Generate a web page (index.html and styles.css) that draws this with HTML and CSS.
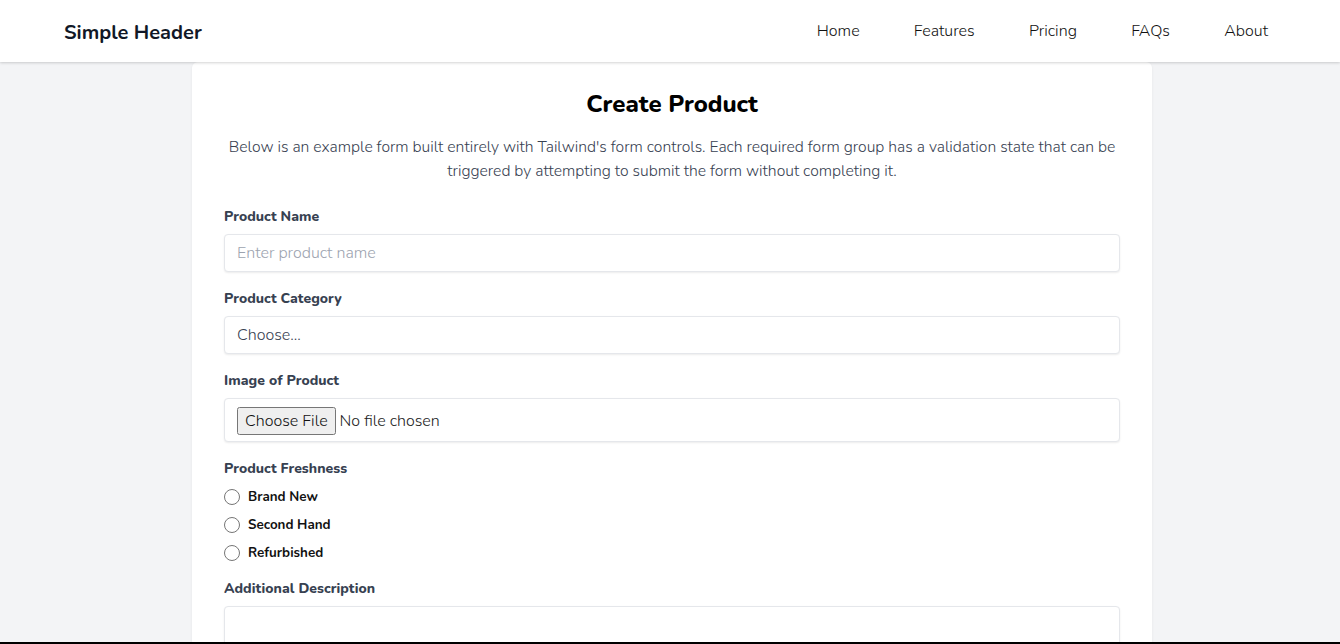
FILE: index.html
```html
<!DOCTYPE html>
<html lang="en">
<head>
<meta charset="utf-8">
<title>Create Product</title>
<link rel="stylesheet" href="styles.css">
</head>
<body>
<header class="site-header">
  <div class="brand">Simple Header</div>
  <nav class="nav">
    <a href="#">Home</a>
    <a href="#">Features</a>
    <a href="#">Pricing</a>
    <a href="#">FAQs</a>
    <a href="#">About</a>
  </nav>
</header>
<main class="page">
  <section class="card">
    <h1 class="title">Create Product</h1>
    <p class="intro">Below is an example form built entirely with Tailwind's form controls. Each required form group has a validation state that can be triggered by attempting to submit the form without completing it.</p>
    <form class="form">
      <div class="group">
        <label class="label" for="name">Product Name</label>
        <input class="control" id="name" type="text" placeholder="Enter product name">
      </div>
      <div class="group">
        <label class="label" for="cat">Product Category</label>
        <div class="control select">Choose...</div>
      </div>
      <div class="group">
        <label class="label" for="img">Image of Product</label>
        <div class="control file"><input id="img" type="file"></div>
      </div>
      <div class="group">
        <span class="label">Product Freshness</span>
        <div class="radios">
          <label class="radio"><span class="dot"></span>Brand New</label>
          <label class="radio"><span class="dot"></span>Second Hand</label>
          <label class="radio"><span class="dot"></span>Refurbished</label>
        </div>
      </div>
      <div class="group">
        <label class="label" for="desc">Additional Description</label>
        <textarea class="control area" id="desc" rows="4"></textarea>
      </div>
    </form>
  </section>
</main>
<div class="edge"></div>
</body>
</html>
```
FILE: styles.css
```css
* { box-sizing: border-box; }
html, body { margin: 0; padding: 0; }
body {
  font-family: "Nunito", "Lato", "Open Sans", sans-serif;
  background: #f3f4f6;
  color: #111827;
}
.site-header {
  position: relative;
  z-index: 2;
  height: 62px;
  background: #fff;
  box-shadow: 0 1px 3px rgba(0,0,0,0.12), 0 1px 2px rgba(0,0,0,0.06);
  display: flex;
  align-items: center;
  justify-content: space-between;
  padding: 0 72px 0 64px;
}
.brand {
  font-size: 20px;
  font-weight: 700;
  color: #111827;
  padding-top: 3px;
}
.nav { display: flex; gap: 54.25px; }
.nav a {
  color: #111;
  text-decoration: none;
  font-size: 16px;
  font-weight: 300;
}
.page {
  display: flex;
  justify-content: center;
  padding-left: 4px;
}
.card {
  width: 960px;
  background: #fff;
  border-radius: 6px;
  padding: 26px 32px 32px;
  box-shadow: 0 1px 3px rgba(0,0,0,0.06);
}
.title {
  margin: 0;
  text-align: center;
  font-size: 24px;
  line-height: 32px;
  font-weight: 800;
  color: #000;
}
.intro {
  margin: 15px 0 0;
  text-align: center;
  font-size: 15.7px;
  line-height: 24px;
  font-weight: 300;
  color: #374151;
}
.form { margin-top: 23px; display: flex; flex-direction: column; gap: 16px; }
.group { display: flex; flex-direction: column; }
.label {
  display: block;
  font-size: 14px;
  line-height: 20px;
  font-weight: 800;
  letter-spacing: 0.05px;
  color: #374151;
  padding-top: 1px;
  margin-bottom: 7px;
}
.control {
  display: block;
  width: 100%;
  font-family: inherit;
  font-size: 16px;
  font-weight: 300;
  line-height: 24px;
  padding: 6px 12px;
  border: 1px solid #e5e7eb;
  border-radius: 4px;
  background: #fff;
  color: #374151;
  box-shadow: 0 1px 2px rgba(0,0,0,0.08);
  outline: none;
}
.control::placeholder { color: #9ca3af; }
.file { padding: 8px 12px; height: 44px; }
.file input {
  font-family: "Nunito", sans-serif;
  font-size: 16px;
  font-weight: 300;
  color: #222;
}
.file input::file-selector-button {
  font-family: "Nunito", sans-serif;
  font-size: 16px;
  font-weight: 300;
  color: #111;
  padding: 1px 6px;
}
.radios {
  display: flex;
  flex-direction: column;
  gap: 8px;
  margin-top: 1px;
  margin-bottom: -1px;
}
.radio {
  display: flex;
  align-items: center;
  gap: 8px;
  font-size: 13.4px;
  line-height: 20px;
  font-weight: 700;
  color: #111;
}
.dot {
  width: 16px;
  height: 16px;
  border: 1px solid #767676;
  border-radius: 50%;
  background: #fff;
}
.area { height: 100px; resize: none; }
.edge {
  position: fixed;
  left: 0; right: 0; bottom: 0;
  height: 2px;
  background: #000;
  z-index: 5;
}
```
